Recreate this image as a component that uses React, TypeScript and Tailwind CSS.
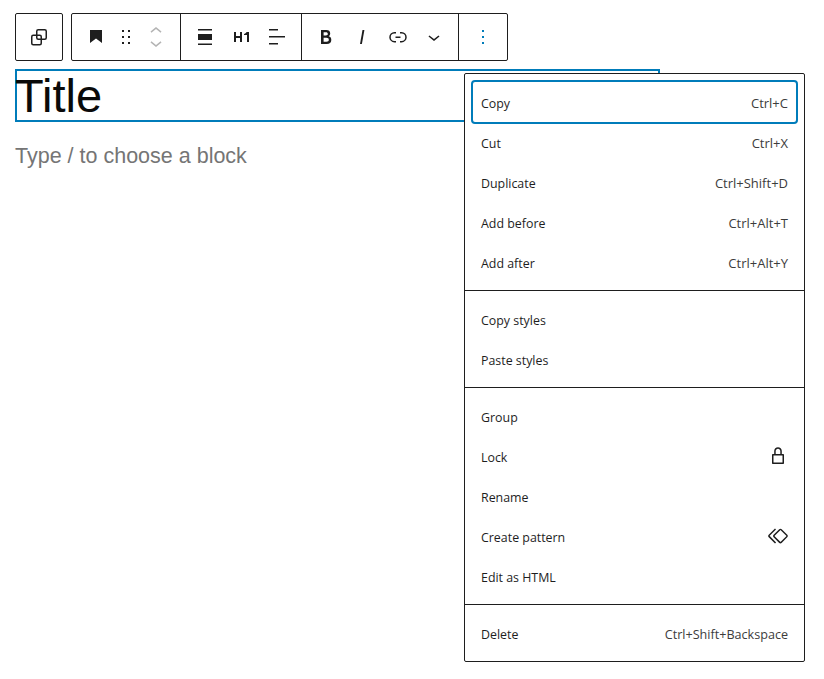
import React from "react";

const Icon = ({ d, size = 24, box = 24, cls = "fill-[#1e1e1e]" }: { d: string; size?: number; box?: number; cls?: string }) => (
  <svg width={size} height={size} viewBox={`0 0 ${box} ${box}`} className={cls}>
    <path d={d} />
  </svg>
);

const Btn = ({ w = "w-9", children }: { w?: string; children: React.ReactNode }) => (
  <div className={`${w} h-[46px] flex items-center justify-center relative`}>{children}</div>
);

const Group = ({ children, border = true }: { children: React.ReactNode; border?: boolean }) => (
  <div className={`flex px-[6px] ${border ? "border-r border-[#1e1e1e]" : ""}`}>{children}</div>
);

type Row = { label: string; hint?: string; icon?: "lock" | "symbol"; focus?: boolean; small?: boolean };

const groups: Row[][] = [
  [
    { label: "Copy", hint: "Ctrl+C", focus: true },
    { label: "Cut", hint: "Ctrl+X" },
    { label: "Duplicate", hint: "Ctrl+Shift+D" },
    { label: "Add before", hint: "Ctrl+Alt+T" },
    { label: "Add after", hint: "Ctrl+Alt+Y" },
  ],
  [{ label: "Copy styles" }, { label: "Paste styles" }],
  [
    { label: "Group" },
    { label: "Lock", icon: "lock" },
    { label: "Rename" },
    { label: "Create pattern", icon: "symbol" },
    { label: "Edit as HTML" },
  ],
  [{ label: "Delete", hint: "Ctrl+Shift+Backspace", small: true }],
];

const lock =
  "M17 10h-1.2V7c0-2.1-1.7-3.8-3.8-3.8-2.1 0-3.8 1.7-3.8 3.8v3H7c-.6 0-1 .4-1 1v8c0 .6.4 1 1 1h10c.6 0 1-.4 1-1v-8c0-.6-.4-1-1-1zm-.5 8.5h-9v-7h9v7zM9.7 7c0-1.3 1-2.3 2.3-2.3s2.3 1 2.3 2.3v3H9.7V7z";
const symbol =
  "M21.3 10.8l-5.6-5.6c-.7-.7-1.8-.7-2.5 0l-5.6 5.6c-.7.7-.7 1.8 0 2.5l5.6 5.6c.3.3.8.5 1.2.5s.9-.2 1.2-.5l5.6-5.6c.8-.7.8-1.9.1-2.5zm-1 1.4l-5.6 5.6c-.1.1-.3.1-.4 0l-5.6-5.6c-.1-.1-.1-.3 0-.4l5.6-5.6s.1-.1.2-.1.1 0 .2.1l5.6 5.6c.1.1.1.3 0 .4zm-16.6-.4L10 5.5l-1-1-6.3 6.3c-.7.7-.7 1.8 0 2.5L9 19.5l1.1-1.1-6.3-6.3c-.2 0-.2-.2-.1-.3z";

export default function App() {
  return (
    <div className="relative w-[824px] h-[679px] bg-white overflow-hidden pl-[15px] pt-[13px] font-['Liberation_Sans',sans-serif] text-[#1e1e1e]">
      <div className="flex gap-2">
        <div className="w-12 h-12 border border-[#1e1e1e] rounded-[2px] flex items-center justify-center">
          <svg width="24" height="24" viewBox="0 0 24 24" fill="none" stroke="#1e1e1e" strokeWidth="1.5">
            <rect x="4.75" y="10.25" width="9.5" height="9.5" rx="1.5" />
            <rect x="9.75" y="4.75" width="9.5" height="9.5" rx="1.5" />
          </svg>
        </div>
        <div className="flex h-12 border border-[#1e1e1e] rounded-[2px]">
          <Group>
            <Btn>
              <Icon d="M6 5h12v13l-6-4.5L6 18V5z" />
            </Btn>
            <Btn w="w-6">
              <Icon d="M8 7h2V5H8v2zm0 6h2v-2H8v2zm0 6h2v-2H8v2zm6-14v2h2V5h-2zm0 8h2v-2h-2v2zm0 6h2v-2h-2v2z" />
            </Btn>
            <Btn>
              <div className="flex flex-col items-center gap-1">
                <svg width="24" height="12" viewBox="0 0 24 12" className="fill-[#b4b4b4]">
                  <path d="M6.5 8.5 12 4l5.5 4.5-.95 1.15L12 6 7.45 9.65z" />
                </svg>
                <svg width="24" height="12" viewBox="0 0 24 12" className="fill-[#b4b4b4]">
                  <path d="M6.5 3.5 12 8l5.5-4.5-.95-1.15L12 6 7.45 2.35z" />
                </svg>
              </div>
            </Btn>
          </Group>
          <Group>
            <Btn>
              <Icon d="M19 5.5H5V4h14v1.5ZM19 20H5v-1.5h14V20ZM5 9h14v6H5V9Z" />
            </Btn>
            <Btn>
              <Icon size={20} box={20} d="M9 5h2v10H9v-4H5v4H3V5h2v4h4V5zm6.6 0c-.6.9-1.5 1.7-2.6 2v1h3v7h2V5h-2.4z" />
            </Btn>
            <Btn>
              <Icon d="M13 5.5H4V4h9v1.5Zm7 7H4V11h16v1.5Zm-7 7H4V18h9v1.5Z" />
            </Btn>
          </Group>
          <Group>
            <Btn>
              <Icon d="M14.7 11.3c1-.6 1.5-1.6 1.5-3 0-2.3-1.3-3.4-4-3.4H7v14h5.8c1.4 0 2.5-.3 3.3-1 .8-.7 1.2-1.7 1.2-2.9.1-1.9-.8-3.1-2.6-3.7zm-5.1-4h2.3c.6 0 1.1.1 1.4.4.3.3.5.7.5 1.2s-.2 1-.5 1.2c-.3.3-.8.4-1.4.4H9.6V7.3zm4.6 9c-.4.3-1 .4-1.7.4H9.6v-3.9h2.9c.7 0 1.3.2 1.7.5.4.3.6.8.6 1.5s-.2 1.2-.6 1.5z" />
            </Btn>
            <Btn>
              <Icon d="M12.5 5L10 19h1.9l2.5-14z" />
            </Btn>
            <Btn>
              <Icon d="M10 17.389H8.444A5.194 5.194 0 1 1 8.444 7H10v1.5H8.444a3.694 3.694 0 0 0 0 7.389H10v1.5ZM14 7h1.556a5.194 5.194 0 0 1 0 10.39H14v-1.5h1.556a3.694 3.694 0 0 0 0-7.39H14V7Zm-4.5 6h5v-1.5h-5V13Z" />
            </Btn>
            <Btn>
              <Icon d="M17.5 11.6L12 16l-5.5-4.4.9-1.2L12 14l4.5-3.6 1 1.2z" />
            </Btn>
          </Group>
          <Group border={false}>
            <Btn>
              <Icon cls="fill-[#007cba]" d="M13 19h-2v-2h2v2zm0-6h-2v-2h2v2zm0-6h-2V5h2v2z" />
            </Btn>
          </Group>
        </div>
      </div>

      <div className="mt-2 w-[645px] h-[53px] border-2 border-[#007cba] text-[47px] leading-[50px] text-[#0a0a0a]">
        <span className="-ml-[2px]">Title</span>
      </div>
      <p className="mt-5 text-[21.5px] leading-[28px] text-[#757575]">Type / to choose a block</p>

      <div className="absolute left-[464px] top-[73px] w-[341px] bg-white border border-[#1e1e1e] rounded-[2px] font-['Open_Sans',sans-serif] text-[12.4px] text-[#1e1e1e]">
        {groups.map((g, i) => (
          <div key={i} className={`p-2 ${i ? "border-t border-[#1e1e1e]" : ""}`}>
            {g.map((r) => (
              <div
                key={r.label}
                className={`h-10 px-2 flex items-center justify-between rounded-[2px] ${r.focus ? "outline-2 outline-[#007cba]" : ""}`}
              >
                <span className="pt-1">{r.label}</span>
                {r.hint && <span className={`pt-1 text-[#3c3c3c] ${r.small ? "text-[12.6px]" : "text-[13px]"}`}>{r.hint}</span>}
                {r.icon === "lock" && <span className="-mr-[2px]"><Icon d={lock} /></span>}
                {r.icon === "symbol" && <span className="-mr-[2px]"><Icon d={symbol} /></span>}
              </div>
            ))}
          </div>
        ))}
      </div>
    </div>
  );
}
